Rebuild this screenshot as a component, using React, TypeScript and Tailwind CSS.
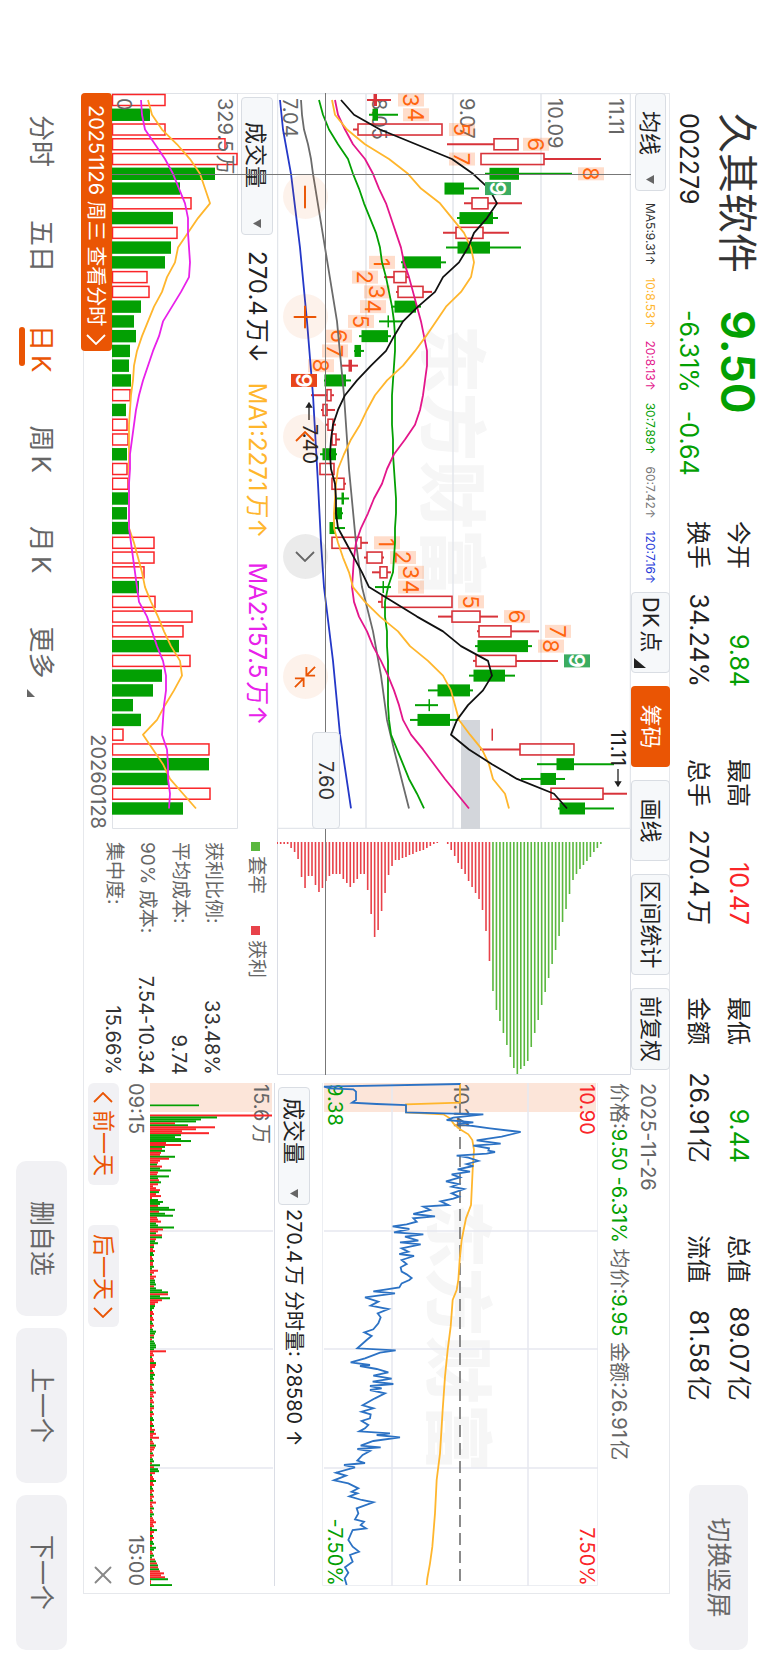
import { useState } from 'react';
import { Minus, Plus, X } from 'lucide-react';

const GREEN = '#03a003';
const RED = '#d8333a';
const BRIGHT_RED = '#fa2528';
const YELLOW = '#ffb62d';
const MAGENTA = '#e3168b';
const VIOLET = '#e821ea';

const STEP = 14.76;
const cx = (i: number) => 7 + STEP * i;

const STATS = [
  [
    { label: '今开', value: '9.84', tone: 'text-[#03a003]' },
    { label: '换手', value: '34.24%', tone: 'text-[#222]' },
  ],
  [
    { label: '最高', value: '10.47', tone: 'text-[#fa2528]' },
    { label: '总手', value: '270.4万', tone: 'text-[#222]' },
  ],
  [
    { label: '最低', value: '9.44', tone: 'text-[#03a003]' },
    { label: '金额', value: '26.91亿', tone: 'text-[#222]' },
  ],
  [
    { label: '总值', value: '89.07亿', tone: 'text-[#222]' },
    { label: '流值', value: '81.58亿', tone: 'text-[#222]' },
  ],
];

const MA_LABELS = [
  { text: 'MA5:9.31↑', tone: 'text-[#333]' },
  { text: '10:8.53↑', tone: 'text-[#ffb62d]' },
  { text: '20:8.13↑', tone: 'text-[#e3168b]' },
  { text: '30:7.89↑', tone: 'text-[#03a003]' },
  { text: '60:7.42↑', tone: 'text-[#777]' },
  { text: '120:7.16↑', tone: 'text-[#2438d8]' },
];

// [low, body low, body high, high, kind] - r: hollow red, s: solid red, g: green
type Candle = [number, number, number, number, 'r' | 's' | 'g'];

const CANDLES: Candle[] = [
  [367, 374, 377, 391, 's'], [369, 373, 378, 398, 'g'], [353, 358, 442, 442, 'r'], [447, 494, 518, 518, 'r'],
  [481, 481, 544, 601, 'r'], [485, 490, 519, 572, 'g'], [445, 445, 464, 479, 'g'], [464, 472, 488, 522, 'r'],
  [457, 460, 493, 498, 'g'], [443, 456, 483, 509, 'r'], [446, 458, 490, 521, 'g'], [401, 403, 441, 446, 'g'],
  [384, 394, 406, 409, 'r'], [396, 398, 423, 432, 'r'], [391, 395, 416, 421, 'g'], [379, 388, 389, 403, 'g'],
  [359, 362, 388, 391, 'g'], [354, 355, 361, 364, 'g'], [341, 349, 352, 358, 's'], [324, 325, 346, 351, 'g'],
  [311, 327, 331, 334, 'r'], [321, 323, 327, 335, 'r'], [325, 328, 333, 336, 'r'], [331, 332, 336, 340, 'r'],
  [320, 323, 336, 337, 'g'], [320, 320, 334, 334, 'r'], [332, 332, 344, 346, 'r'], [337, 342, 344, 349, 'g'],
  [334, 335, 342, 343, 'g'], [330, 330, 335, 345, 'g'], [332, 332, 361, 368, 'r'], [364, 367, 382, 384, 'r'],
  [372, 380, 387, 391, 'r'], [375, 383, 384, 391, 'g'], [378, 382, 452, 452, 'r'], [438, 452, 480, 498, 'r'],
  [477, 479, 511, 539, 'r'], [475, 478, 528, 532, 'g'], [473, 476, 516, 558, 'r'], [469, 474, 505, 515, 'g'],
  [428, 438, 470, 473, 'g'], [415, 429, 430, 438, 'g'], [410, 418, 450, 459, 'g'], [492, 492, 493, 493, 's'],
  [480, 520, 574, 574, 'r'], [537, 557, 574, 614, 'g'], [521, 541, 556, 565, 'g'], [551, 551, 603, 627, 'r'],
  [558, 560, 585, 614, 'g'],
];

const MA5 = [
  341, 354, 380, 416, 452, 473, 489, 497, 487, 474, 468, 459, 443, 435, 418, 403, 394, 386, 371, 357, 345, 338, 333,
  331, 330, 331, 335, 336, 336, 338, 346, 354, 362, 369, 393, 417, 443, 461, 488, 492, 483, 468, 457, 451, 469, 492,
  517, 554, 567,
];
const MA10 = [
  332, 335, 347, 365, 389, 408, 421, 440, 452, 464, 471, 474, 471, 461, 446, 436, 426, 415, 403, 387, 375, 367, 360,
  351, 344, 338, 336, 335, 334, 334, 338, 343, 349, 353, 365, 380, 398, 410, 428, 443, 451, 455, 459, 470, 482, 489,
  493, 505, 509,
];
const MA20 = [
  335, 338, 345, 353, 365, 373, 379, 386, 391, 396, 401, 404, 409, 413, 417, 421, 424, 427, 427, 425, 423, 420, 415,
  405, 394, 387, 382, 374, 368, 361, 356, 354, 353, 352, 354, 359, 367, 373, 381, 388, 394, 399, 403, 411, 423, 434,
  445, 457, 469,
];
const MA30 = [
  319, 323, 329, 338, 348, 353, 359, 364, 370, 376, 380, 382, 386, 389, 392, 394, 395, 395, 394, 393, 392, 392, 392,
  393, 393, 394, 395, 396, 396, 395, 395, 394, 393, 388, 385, 385, 387, 387, 388, 388, 388, 388, 389, 391, 397, 403,
  409, 417, 424,
];
// slow averages only need a few knots: [candle, level]
const MA60 = [
  [0, 301], [1, 302], [2, 304], [3, 308], [4, 311], [5, 313], [10, 325], [15, 337], [20, 344], [25, 349], [30, 356],
  [33, 362], [36, 373], [39, 381], [42, 387], [44, 394], [48, 409],
];
const MA120 = [
  [0, 280], [2, 283], [5, 291], [10, 300], [15, 307], [20, 313], [26, 318], [30, 321], [33, 324], [38, 333],
  [43, 340], [48, 351],
];

// nine-turn counters: [candle, level, digit]
const TURNS = [
  [0, 411, 3], [1, 416, 4], [2, 462, 5], [3, 536, 6], [4, 462, 7], [5, 591, 8],
  [11, 382, 1], [12, 365, 2], [13, 377, 3], [14, 373, 4], [15, 361, 5], [16, 339, 6], [17, 335, 7], [18, 321, 8],
  [30, 387, 1], [31, 403, 2], [32, 411, 3], [33, 411, 4], [34, 471, 5], [35, 517, 6], [36, 558, 7], [37, 551, 8],
];
const NINES = [
  { i: 6, level: 498, fill: '#3bac60' },
  { i: 19, level: 304, fill: '#e8451a' },
  { i: 38, level: 577, fill: '#3bac60' },
];

// positive: red bar, negative: green bar
const VOLUMES = [
  53, -38, 53, 113, 125, -103, -68, 79, -61, 65, -59, -53, 35, 37, -29, -22, -24, -18, -17, -19, 18, -14, 15, 16, -15,
  15, 16, -16, -15, -17, 42, 42, 32, -27, 43, 80, 71, -67, 78, -50, -41, -21, -29, 11, 97, -97, -56, 98, -71,
];
const VOL_MA1 = [
  36, 40, 50, 65, 78, 88, 93, 98, 86, 76, 66, 63, 55, 50, 42, 36, 30, 25, 22, 21, 19, 18, 17, 17, 17, 17, 17, 17, 17,
  17, 22, 26, 30, 33, 39, 46, 52, 59, 68, 70, 62, 53, 45, 31, 41, 51, 58, 71, 84,
];
const VOL_MA2 = [
  29, 30, 33, 43, 53, 61, 67, 73, 76, 76, 77, 78, 77, 69, 60, 51, 47, 41, 36, 31, 27, 24, 22, 20, 18, 18, 17, 17, 17,
  17, 19, 21, 23, 25, 27, 35, 40, 45, 51, 54, 54, 52, 51, 50, 55, 56, 56, 58, 57,
];

// length of every cost bar from the lowest price up, 0 leaves a gap
const CHIPS = [
  2, 2, 2, 2, 6, 10, 17, 35, 46, 34, 34, 43, 50, 46, 39, 34, 32, 32, 32, 37, 41, 45, 41, 37, 32, 32, 48, 72, 95, 88,
  69, 51, 33, 24, 18, 18, 16, 15, 13, 12, 10, 9, 8, 6, 4, 2, 1, 0, 0, 2, 8, 14, 21, 27, 32, 39, 45, 51, 57, 68, 89,
  119, 149, 168, 179, 191, 203, 215, 226, 232, 227, 224, 219, 205, 191, 178, 163, 150, 136, 122, 108, 94, 80, 67, 52,
  38, 32, 27, 23, 19, 15, 10, 6, 2,
];
const FIRST_TRAPPED = 62;

// [level, time] pairs at three units per pixel
const PRICE = [
  450, 12, 42, 20, 60, 25, 130, 28, 138, 35, 138, 60, 126, 68, 200, 72, 288, 75, 288, 97, 520, 103, 430, 113, 410, 120,
  490, 127, 445, 132, 540, 145, 632, 156, 575, 170, 500, 181, 572, 191, 490, 197, 537, 205, 535, 212, 555, 216, 530,
  221, 440, 227, 475, 233, 505, 243, 470, 252, 490, 258, 443, 268, 480, 275, 425, 283, 450, 292, 408, 304, 445, 312,
  425, 320, 462, 327, 425, 340, 447, 350, 430, 356, 392, 364, 415, 375, 340, 380, 360, 390, 310, 402, 375, 409, 310,
  415, 320, 425, 290, 433, 248, 439, 298, 447, 252, 457, 340, 463, 285, 470, 325, 482, 270, 487, 332, 493, 275, 505,
  295, 515, 268, 522, 312, 528, 275, 540, 290, 552, 272, 562, 275, 575, 290, 583, 305, 594, 298, 600, 275, 610, 268,
  622, 230, 628, 190, 634, 255, 640, 165, 652, 205, 665, 182, 677, 235, 687, 203, 700, 212, 712, 205, 730, 190, 748,
  163, 757, 185, 768, 170, 780, 142, 805, 257, 811, 210, 818, 165, 835, 122, 847, 180, 855, 150, 858, 200, 867, 235,
  877, 190, 887, 245, 896, 188, 905, 250, 912, 180, 918, 215, 925, 180, 930, 225, 940, 195, 955, 158, 976, 190, 985,
  155, 995, 182, 1003, 180, 1015, 155, 1023, 175, 1035, 165, 1045, 148, 1054, 240, 1060, 200, 1065, 270, 1072, 190,
  1083, 152, 1097, 212, 1102, 142, 1107, 180, 1113, 158, 1125, 142, 1142, 165, 1149, 102, 1155, 135, 1162, 78, 1178,
  108, 1187, 72, 1201, 115, 1210, 145, 1225, 125, 1235, 142, 1240, 118, 1249, 155, 1260, 190, 1267, 140, 1285, 145,
  1300, 135, 1318, 162, 1325, 152, 1335, 168, 1345, 128, 1350, 115, 1380, 128, 1400, 147, 1415, 120, 1425, 128, 1445,
  105, 1462, 115, 1478, 104, 1495, 110, 1515,
];
const AVERAGE = [
  450, 12, 450, 68, 288, 73, 288, 97, 400, 103, 420, 115, 430, 130, 450, 148, 475, 163, 487, 180, 492, 210, 488, 270,
  483, 375, 468, 415, 455, 480, 449, 540, 445, 600, 440, 630, 428, 660, 422, 740, 413, 810, 405, 890, 398, 990, 390,
  1120, 380, 1200, 375, 1300, 367, 1400, 360, 1450, 352, 1495, 350, 1515,
];

const OPENING = [
  122, -67, -51, -46, 25, -38, 65, 46, 32, 59, -31, -25, -31, -41, 16, 31, -15, 12, -15, 11, 10, -25, 19, 10, 8, -7,
  12, -10, -21, 8, 7, -19, -8, 9, -11, 8, 3, 6, 10, -9, 6, 11, 2, -8, -13, -10, 8, -19, -25, 9, -15, -23, 7, 8, 11,
  -6, -8, -24, 13, 8, -6, 12, -12, 6, -5, -8, 4, -4, 3, 5,
];
const PEAKS: Record<number, number> = {
  75: 3, 79: 8, 82: 6, 84: -5, 85: -5, 86: -6, 87: 4, 88: -6, 89: -12, 90: -18, 91: 18, 92: -10, 93: -20, 94: 12,
  95: 8, 96: 5, 97: -5, 110: -6, 111: -5, 112: 4, 115: -4, 116: -5, 117: -6, 118: -6, 120: 16, 126: -6, 127: 6,
  128: 5, 132: -5, 141: 6, 148: -4, 155: -4, 160: 5, 162: 6, 164: 9, 168: -6, 169: 5, 178: -10, 179: 4, 180: -8,
  181: -9, 182: 5, 186: -6, 197: 6, 207: 6, 211: -7, 220: -6, 226: 5, 227: -6, 228: 7, 229: -8, 230: 8, 231: -9,
  232: 10, 233: 14, 234: 11, 235: 15, 236: -18, 237: 1, 238: 1, 239: -22,
};
const MINUTES = Array.from({ length: 240 }, (_, m) => {
  if (m < OPENING.length) return OPENING[m];
  if (PEAKS[m] !== undefined) return PEAKS[m];
  return ((m * 37) % 7 < 3 ? -1 : 1) * (2 + ((m * 13) % 3));
});

const everyCandle = (levels: number[], top: number) =>
  levels.map((v, i) => `${cx(i)},${top - v}`).join(' ');

const knots = (points: number[][]) => points.map(([i, v]) => `${cx(i)},${631 - v}`).join(' ');

const intraday = (flat: number[]) => {
  const out: string[] = [];
  for (let k = 0; k < flat.length; k += 2) {
    out.push(`${flat[k + 1] / 3 - 3},${288 - flat[k] / 3}`);
  }
  return out.join(' ');
};

function Caret() {
  return (
    <svg viewBox="0 0 9 8" className="h-2 w-[9px]" aria-hidden="true">
      <path d="M0 0H9L4.5 8Z" fill="#666" />
    </svg>
  );
}

function Arrow({ back = false }: { back?: boolean }) {
  return (
    <svg viewBox="0 0 11 20" className="h-5 w-[11px]" fill="none" stroke="currentColor" strokeWidth="1.8" aria-hidden="true">
      <path d={back ? 'M10 1L1 10L10 19' : 'M1 1L10 10L1 19'} />
    </svg>
  );
}

function Picker({ label, value, className }: { label: string; value: string; className: string }) {
  return (
    <label className={`relative block rounded border border-[#d9dde3] bg-[#f6f8fa] ${className}`}>
      <select aria-label={label} className="h-full w-full appearance-none bg-transparent text-[22px] leading-7 text-[#222] outline-none">
        <option>{value}</option>
      </select>
      <span className="pointer-events-none absolute inset-y-0 right-1.5 flex items-center">
        <Caret />
      </span>
    </label>
  );
}

function StockHeader() {
  return (
    <header className="flex h-[98px] shrink-0 items-start pl-[113px] pr-[13px]">
      <div className="w-[197px]">
        <h1 className="mt-1 text-[40px] leading-[54px] text-[#333]">久其软件</h1>
        <p className="text-[25px] leading-[42px] text-[#222]">002279</p>
      </div>
      <div className="w-[211px] text-[#03a003]">
        <p className="mt-0.5 text-[47px] font-semibold leading-[56px]">9.50</p>
        <p className="flex gap-[18px] text-[25px] leading-[42px]">
          <span>-6.31%</span>
          <span>-0.64</span>
        </p>
      </div>
      <div className="flex gap-[72px] pt-2.5">
        {STATS.map((column) => (
          <dl key={column[0].label} className="w-[166px]">
            {column.map((s) => (
              <div key={s.label} className="flex h-10 items-center justify-between whitespace-nowrap">
                <dt className="text-2xl text-[#222]">{s.label}</dt>
                <dd className={`text-[25px] ${s.tone}`}>{s.value}</dd>
              </div>
            ))}
          </dl>
        ))}
      </div>
      <button className="ml-auto mt-5 h-[59px] w-[165px] rounded-[10px] bg-[#f1f1f4] text-[25px] text-[#666]">切换竖屏</button>
    </header>
  );
}

function IndicatorBar() {
  const plain = 'h-full rounded border border-[#d9dde3] bg-[#f6f8fa] text-[22px] text-[#222]';
  return (
    <div className="flex h-[39px] items-center pr-[5px]">
      <Picker label="主图指标" value="均线" className="h-[31px] w-[98px] pl-[17px]" />
      <div className="flex flex-1 justify-between whitespace-nowrap pl-3 pr-2 text-xs">
        {MA_LABELS.map((m) => (
          <span key={m.text} className={m.tone}>
            {m.text}
          </span>
        ))}
      </div>
      <div className="flex h-full gap-[13px]">
        <button aria-haspopup="menu" className={`relative w-[81px] whitespace-nowrap pr-4 ${plain}`}>
          DK点
          <svg viewBox="0 0 10 12" className="absolute bottom-0.5 right-1 h-3 w-2.5" aria-hidden="true">
            <path d="M10 0V12H0Z" fill="#222" />
          </svg>
        </button>
        <button className="h-full w-[81px] rounded bg-[#ea5504] text-[22px] text-white">筹码</button>
        <button className={`w-[81px] ${plain}`}>画线</button>
        <button className={`w-[101px] ${plain}`}>区间统计</button>
        <button className={`w-[82px] ${plain}`}>前复权</button>
      </div>
    </div>
  );
}

function CandleShape({ candle, i }: { candle: Candle; i: number }) {
  const [low, bodyLow, bodyHigh, high, kind] = candle;
  const color = kind === 'g' ? GREEN : RED;
  const x = cx(i);
  return (
    <g stroke={color} strokeWidth="2">
      {high > bodyHigh && <line x1={x} x2={x} y1={631 - high} y2={631 - bodyHigh} />}
      {low < bodyLow && <line x1={x} x2={x} y1={631 - bodyLow} y2={631 - low} />}
      {kind === 'r' ? (
        <rect x={x - 5.5} y={631 - bodyHigh} width="11" height={bodyHigh - bodyLow} fill="none" strokeWidth="1.6" />
      ) : (
        <rect x={x - 6} y={631 - bodyHigh} width="12" height={bodyHigh - bodyLow + 0.5} fill={color} stroke="none" />
      )}
    </g>
  );
}

function Watermark({ x, y }: { x: number; y: number }) {
  return (
    <text x={x} y={y} fontSize="68" fontWeight="900" fill="#f6f6f6">
      东方财富
    </text>
  );
}

function KlineChart() {
  return (
    <svg viewBox="0 0 736 354" className="block w-full" role="img" aria-label="日K线">
      <Watermark x={232} y={204} />
      <g stroke="#e3e6eb" strokeWidth="1.5">
        <path d="M0 .5H736M0 90H736M0 178H736M0 265H736M0 353.5H736M.5 0V354M735.5 0V354" fill="none" />
      </g>
      <rect x="627" y="151" width="109" height="19" fill="#d3d6db" />
      <g fontSize="20" fill="#666">
        <text x="5" y="22">11.11</text>
        <text x="5" y="83">10.09</text>
        <text x="5" y="171">9.07</text>
        <text x="5" y="259">8.05</text>
        <text x="5" y="348">7.04</text>
      </g>
      {CANDLES.map((c, i) => (
        <CandleShape key={i} candle={c} i={i} />
      ))}
      <g fontSize="22" textAnchor="middle" fill="#ff6510">
        {TURNS.map(([i, level, n]) => (
          <g key={i}>
            <rect x={cx(i) - 6.5} y={618 - level} width="13" height="26" fill="#ff6510" fillOpacity=".22" />
            <text x={cx(i)} y={639 - level}>{n}</text>
          </g>
        ))}
      </g>
      <g fill="none" strokeWidth="1.8" strokeLinejoin="round">
        <polyline points={knots(MA120)} stroke="#2438c8" />
        <polyline points={knots(MA60)} stroke="#6b6b6b" />
        <polyline points={everyCandle(MA30, 631)} stroke={GREEN} />
        <polyline points={everyCandle(MA20, 631)} stroke={MAGENTA} />
        <polyline points={everyCandle(MA10, 631)} stroke={YELLOW} />
        <polyline points={everyCandle(MA5, 631)} stroke="#111" />
      </g>
      <g fontSize="22" fontWeight="600" textAnchor="middle" fill="#fff">
        {NINES.map((n) => (
          <g key={n.i}>
            <rect x={cx(n.i) - 6.5} y={618 - n.level} width="13" height="26" fill={n.fill} />
            <text x={cx(n.i)} y={639 - n.level}>9</text>
          </g>
        ))}
      </g>
      <g fontSize="20" fill="#222">
        <text x="673" y="20" textAnchor="end">11.11</text>
        <text x="331" y="328">7.40</text>
        <path d="M676 13H692M689 10.5L693 13L689 15.5ZM327 322H311M314 319.5L310 322L314 324.5Z" stroke="#222" strokeWidth="1.3" />
      </g>
    </svg>
  );
}

function ChartTools() {
  const round = 'flex size-[45px] items-center justify-center rounded-full bg-[#ea5504]/8 text-[#ea5504]';
  return (
    <div className="absolute bottom-1.5 left-[81px] flex gap-[75px]">
      <button aria-label="缩小" className={round}>
        <Minus size={36} strokeWidth={1.3} />
      </button>
      <button aria-label="放大" className={round}>
        <Plus size={36} strokeWidth={1.3} />
      </button>
      <button aria-label="左移" className={round}>
        <Arrow back />
      </button>
      <button aria-label="右移" className="flex size-[45px] items-center justify-center rounded-full bg-black/8 text-[#666]">
        <Arrow />
      </button>
      <button aria-label="收起" className={round}>
        <svg viewBox="0 0 24 24" className="size-[22px]" fill="none" stroke="currentColor" strokeWidth="2">
          <path d="M1 1L10 10M10.500 1V10.500H1M23 23L14 14M13.500 23V13.500H23" />
        </svg>
      </button>
    </div>
  );
}

function ChipChart() {
  return (
    <svg viewBox="0 0 246 354" className="block w-full" role="img" aria-label="筹码分布">
      <path d="M0 .5H245.500V353.500H0" fill="none" stroke="#dadde5" />
      {CHIPS.map((length, k) => (
        <rect
          key={k}
          x="13"
          y={353 - 3.48 * k}
          width={length}
          height="1.6"
          fill={k < FIRST_TRAPPED ? '#e8424a' : '#5bb83f'}
        />
      ))}
    </svg>
  );
}

function VolumeChart() {
  return (
    <svg viewBox="0 0 736 126" className="block w-full" role="img" aria-label="成交量">
      <path d="M0 .5H735.500V125.500H.5V0" fill="none" stroke="#dfe2e7" />
      {VOLUMES.map((v, i) =>
        v > 0 ? (
          <rect key={i} x={cx(i) - 5.5} y={126 - v} width="11" height={v - 0.5} fill="none" stroke={BRIGHT_RED} strokeWidth="1.5" />
        ) : (
          <rect key={i} x={cx(i) - 6.2} y={126 + v} width="12.4" height={-v} fill={GREEN} />
        ),
      )}
      <g fontSize="20" fill="#666">
        <text x="5" y="20">329.5万</text>
        <text x="5" y="121">0</text>
      </g>
      <g fill="none" strokeWidth="1.8" strokeLinejoin="round">
        <polyline points={everyCandle(VOL_MA1, 126)} stroke={YELLOW} />
        <polyline points={everyCandle(VOL_MA2, 126)} stroke={VIOLET} />
      </g>
    </svg>
  );
}

function ChipSummary() {
  const rows = [
    ['获利比例:', '33.48%'],
    ['平均成本:', '9.74'],
    ['90% 成本:', '7.54-10.34'],
    ['集中度:', '15.66%'],
  ];
  return (
    <div className="w-[246px] pl-[13px] text-[19px] text-[#666]">
      <div className="flex h-[42px] items-center gap-8">
        <span className="flex items-center gap-[5px]">
          <i className="size-[9px] bg-[#5bb83f]" />
          套牢
        </span>
        <span className="flex items-center gap-[5px]">
          <i className="size-[9px] bg-[#e8424a]" />
          获利
        </span>
      </div>
      <dl className="pt-1.5">
        {rows.map(([k, v]) => (
          <div key={k} className="flex h-[33px] items-center justify-between">
            <dt>{k}</dt>
            <dd className="text-xl text-[#333]">{v}</dd>
          </div>
        ))}
      </dl>
    </div>
  );
}

function IntradayPanel() {
  const day = 'flex h-[31px] w-[102px] items-center justify-center gap-[7px] rounded-md bg-[#f1f1f4] text-[22px] text-[#ea5504]';
  return (
    <section className="w-[519px] px-2">
      <div className="h-[72px] whitespace-nowrap pt-2 text-xl text-[#666]">
        <p className="leading-[29px]">2025-11-26</p>
        <p className="leading-[29px]">
          价格:<span className="text-[#03a003]">9.50 -6.31%</span> 均价:<span className="text-[#03a003]">9.95</span> 金额:26.91亿
        </p>
      </div>
      <svg viewBox="0 0 503 276" className="block w-full" role="img" aria-label="分时走势">
        <rect x="0" y="2" width="29" height="272" fill="#fce5d9" />
        <Watermark x={117} y={165} />
        <path d="M0 .5H502.500V275.500H0" fill="none" stroke="#eceef2" />
        <path d="M0 70H503M0 206H503M148 0V274M266 0V274M385 0V274" fill="none" stroke="#e6e8f0" strokeWidth="1.5" />
        <path d="M0 138H503" stroke="#777" strokeWidth="1.7" strokeDasharray="12 6" />
        <g fontSize="20">
          <text x="1" y="18" fill={BRIGHT_RED}>10.90</text>
          <text x="1" y="144" fill="#666">10.14</text>
          <text x="1" y="270" fill={GREEN}>9.38</text>
          <text x="503" y="18" fill={BRIGHT_RED} textAnchor="end">7.50%</text>
          <text x="503" y="270" fill={GREEN} textAnchor="end">-7.50%</text>
        </g>
        <g fill="none" strokeWidth="1.8">
          <polyline points={intraday(AVERAGE)} stroke={YELLOW} />
          <polyline points={intraday(PRICE)} stroke="#2c72c4" />
        </g>
      </svg>
      <div className="flex h-[47px] items-center gap-1 whitespace-nowrap pl-1 pt-2 text-xl text-[#222]">
        <Picker label="分时指标" value="成交量" className="h-8 w-[118px] pl-2.5" />
        <span>270.4万 分时量: 28580 ↑</span>
      </div>
      <svg viewBox="0 0 503 125" className="block w-full" role="img" aria-label="分时量">
        <rect x="0" y="3" width="29" height="122" fill="#fce5d9" />
        <path d="M0 .5H503" stroke="#dadde5" />
        <path d="M148 2V125M266 2V125M385 2V125" stroke="#e6e8f0" strokeWidth="1.5" />
        <text x="1" y="21" fontSize="20" fill="#666">15.6万</text>
        <rect x="21.500" y="76" width="1.700" height="49" fill={GREEN} />
        {MINUTES.map((v, m) => (
          <rect
            key={m}
            x={31.5 + m * 1.965}
            y={125 - Math.abs(v)}
            width="2"
            height={Math.abs(v)}
            fill={v > 0 ? BRIGHT_RED : GREEN}
          />
        ))}
      </svg>
      <div className="flex h-[27px] items-center justify-between text-xl text-[#666]">
        <span>09:15</span>
        <span>15:00</span>
      </div>
      <div className="flex items-center gap-10 pt-1">
        <button className={day}>
          <Arrow back />
          前一天
        </button>
        <button className={day}>
          后一天
          <Arrow />
        </button>
        <button aria-label="关闭" className="-mr-1 ml-auto flex h-[31px] items-center text-[#888]">
          <X size={30} strokeWidth={1.5} />
        </button>
      </div>
    </section>
  );
}

function BottomBar() {
  const [period, setPeriod] = useState('日K');
  const tabs = [
    ['分时', ''],
    ['五日', ''],
    ['日', 'K'],
    ['周', 'K'],
    ['月', 'K'],
    ['更多', ''],
  ];
  return (
    <footer className="flex h-[83px] shrink-0 items-center justify-between pl-[115px] pr-[13px]">
      <nav className="flex gap-[53px] text-[26px] leading-9">
        {tabs.map(([name, suffix]) => {
          const active = period === name + suffix;
          return (
            <button
              key={name}
              onClick={() => setPeriod(name + suffix)}
              className={`relative flex gap-1 ${active ? 'text-[#ea5504]' : 'text-[#666]'}`}
            >
              <span>{name}</span>
              {suffix && <span>{suffix}</span>}
              {active && <span className="absolute -bottom-1 left-0.5 h-1.5 w-[39px] rounded-full bg-[#ea5504]" />}
              {name === '更多' && (
                <svg viewBox="0 0 8 8" className="mb-1 ml-1.5 size-2 self-end" aria-hidden="true">
                  <path d="M8 0V8H0Z" fill="#666" />
                </svg>
              )}
            </button>
          );
        })}
      </nav>
      <div className="flex gap-3 text-[25px] text-[#666]">
        <button className="h-[51px] w-[155px] rounded-[10px] bg-[#f1f1f4]">删自选</button>
        <button className="h-[51px] w-[155px] rounded-[10px] bg-[#f1f1f4]">上一个</button>
        <button className="h-[51px] w-[155px] rounded-[10px] bg-[#f1f1f4]">下一个</button>
      </div>
    </footer>
  );
}

export default function App() {
  return (
    <div className="h-screen w-full overflow-hidden bg-white">
      {/* landscape layout shown on a portrait screen */}
      <div className="flex h-[100vw] w-[100vh] origin-top-left translate-x-[100vw] rotate-90 flex-col font-['Inter','Noto_Sans_CJK_SC',sans-serif] [text-autospace:normal]">
        <StockHeader />
        <main className="ml-[93px] mr-[69px] flex flex-1 ring-1 ring-inset ring-[#e6e8ec]">
          <section className="relative min-w-0 flex-1">
            <IndicatorBar />
            <div className="relative flex">
              <div className="relative flex-1">
                <KlineChart />
                <ChartTools />
              </div>
              <div className="w-[246px]">
                <ChipChart />
              </div>
              {/* cursor price */}
              <div className="pointer-events-none absolute inset-x-0 bottom-12 h-px bg-[#777]" />
              <div className="absolute bottom-[35px] right-[246px] flex h-7 w-[97px] items-center justify-center rounded border border-[#d9dde3] bg-[#f6f8fa] text-xl text-[#333]">
                7.60
              </div>
            </div>
            <div className="flex">
              <div className="flex-1">
                <div className="flex h-[39px] items-center whitespace-nowrap pl-1 text-2xl">
                  <Picker label="副图指标" value="成交量" className="h-8 w-[138px] pl-6" />
                  <span className="ml-4 text-[#222]">270.4万↓</span>
                  <span className="ml-5 text-[#ffb62d]">MA1:227.1万↑</span>
                  <span className="ml-6 text-[#e821ea]">MA2:157.5万↑</span>
                </div>
                <VolumeChart />
                <div className="flex h-[29px] items-start justify-between text-xl text-[#666]">
                  <button className="flex h-[31px] items-center gap-2 whitespace-nowrap rounded bg-[#ea5504] pl-3 pr-1.5 text-white">
                    20251126 周三 查看分时
                    <Arrow />
                  </button>
                  <span className="leading-7">20260128</span>
                </div>
              </div>
              <ChipSummary />
            </div>
            {/* cursor date */}
            <div className="pointer-events-none absolute bottom-[29px] left-[81px] top-[39px] w-px bg-[#777]" />
          </section>
          <IntradayPanel />
        </main>
        <BottomBar />
      </div>
    </div>
  );
}
